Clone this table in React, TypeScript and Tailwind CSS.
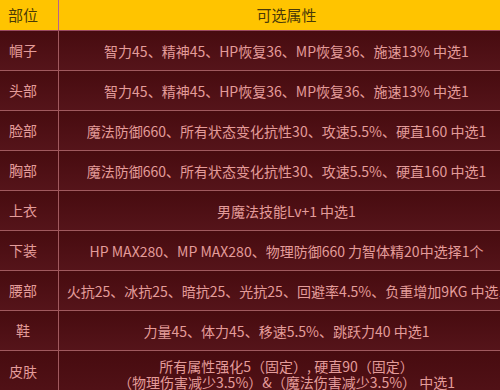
const rows: { part: string; attrs: string[] }[] = [
  { part: '帽子', attrs: ['智力45、精神45、HP恢复36、MP恢复36、施速13% 中选1'] },
  { part: '头部', attrs: ['智力45、精神45、HP恢复36、MP恢复36、施速13% 中选1'] },
  { part: '脸部', attrs: ['魔法防御660、所有状态变化抗性30、攻速5.5%、硬直160 中选1'] },
  { part: '胸部', attrs: ['魔法防御660、所有状态变化抗性30、攻速5.5%、硬直160 中选1'] },
  { part: '上衣', attrs: ['男魔法技能Lv+1 中选1'] },
  { part: '下装', attrs: ['HP MAX280、MP MAX280、物理防御660 力智体精20中选择1个'] },
  { part: '腰部', attrs: ['火抗25、冰抗25、暗抗25、光抗25、回避率4.5%、负重增加9KG 中选1'] },
  { part: '鞋', attrs: ['力量45、体力45、移速5.5%、跳跃力40 中选1'] },
  {
    part: '皮肤',
    attrs: ['所有属性强化5（固定）, 硬直90（固定）', '（物理伤害减少3.5%）&（魔法伤害减少3.5%） 中选1'],
  },
];

export default function App() {
  return (
    <div className="w-[500px] h-[390px] overflow-hidden bg-[#4b0c10]">
      <div
        className="w-[514px] text-[14px] text-[#e49c9a]"
        style={{ fontFamily: '"Microsoft YaHei", "Noto Sans CJK SC", sans-serif' }}
      >
        {/* 表头 */}
        <div className="grid grid-cols-[59px_1fr] h-[31px] bg-[#ffc400] border-b border-[#9a4a62] text-[15px] text-[#4a3a08]">
          <div className="flex items-center justify-center pr-[12px] border-r border-[#b8628e]">部位</div>
          <div className="flex items-center justify-center">可选属性</div>
        </div>

        {rows.map((r) => {
          const multi = r.attrs.length > 1;
          return (
            <div
              key={r.part}
              className={`grid grid-cols-[59px_1fr] border-b border-[#a0595e] bg-gradient-to-b from-[#470b0f] to-[#55141a] ${
                multi ? 'h-[60px]' : 'h-[40px]'
              }`}
            >
              <div
                className={`flex justify-center pr-[12px] border-r border-[#a0595e] ${
                  multi ? 'items-start pt-[8px] leading-[24px]' : 'items-center'
                }`}
              >
                {r.part}
              </div>
              <div
                className={`flex flex-col items-center leading-[16px] whitespace-nowrap ${
                  multi ? 'justify-start pt-[7px]' : 'justify-center'
                }`}
              >
                {r.attrs.map((a) => (
                  <span key={a}>{a}</span>
                ))}
              </div>
            </div>
          );
        })}
      </div>
    </div>
  );
}
